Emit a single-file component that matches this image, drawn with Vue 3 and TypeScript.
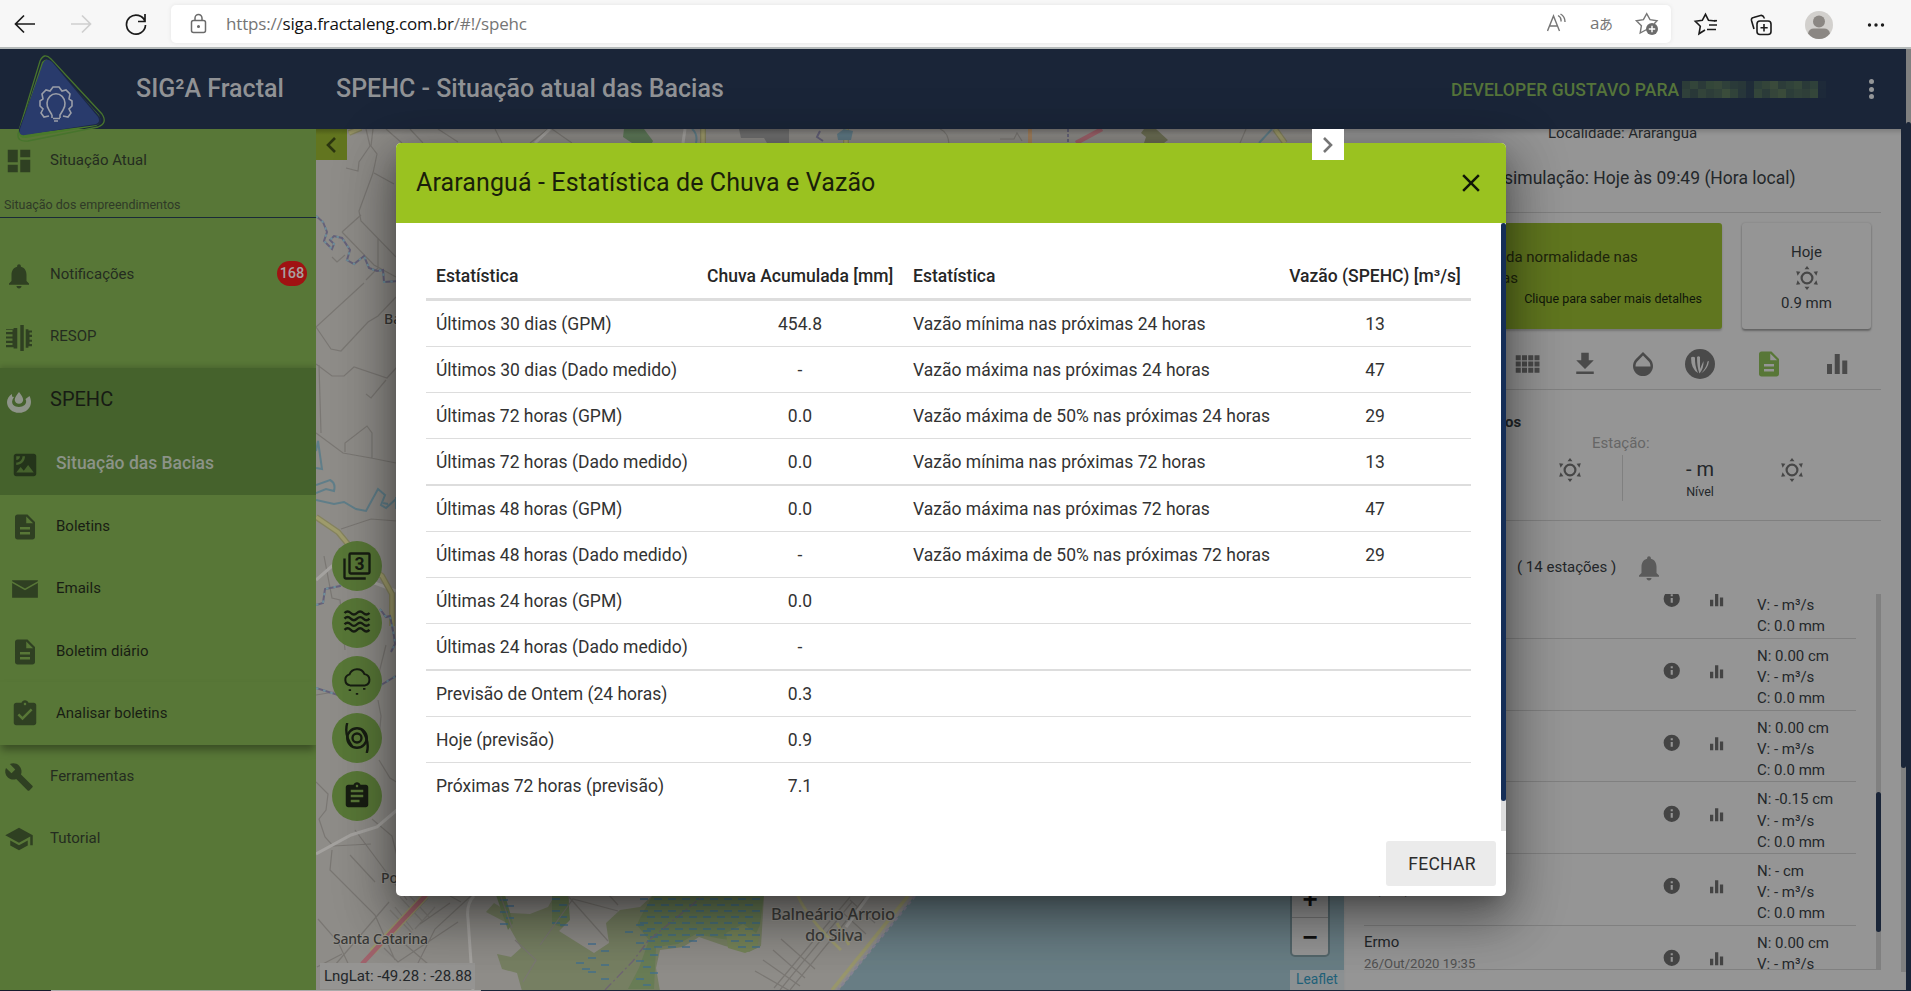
<script setup lang="ts">
interface NavItem { label: string; icon: string; kind: string; badge?: string }
interface StatRow { rain: string; rainValue: string; flow?: string; flowValue?: string; group?: boolean }

const glyphs: Record<string, string> = {
  dashboard: 'M3 13h8V3H3v10zm0 8h8v-6H3v6zm10 0h8V11h-8v10zm0-18v6h8V3h-8z',
  bell: 'M12 22c1.1 0 2-.9 2-2h-4c0 1.1.89 2 2 2zm6-6v-5c0-3.07-1.64-5.64-4.5-6.32V4c0-.83-.67-1.5-1.5-1.5s-1.5.67-1.5 1.5v.68C7.63 5.36 6 7.92 6 11v5l-2 2v1h16v-1l-2-2z',
  dam: 'M-.5 4H7V2.800h3.400v19H7V20.500H-.5v-2H6v-2H-.5v-2H6v-2H-.5v-2H6v-2H-.5v-2H6v-2H-.5zM13.200 0h3.200v24h-3.200zM18.200 4h2.500v1h4v2h-3v2h3v2h-3v2.500h3v2h-3v2h3v2h-4v1.500h-2.500z',
  drop: 'M12 0c2 3 4.200 5 4.200 8a4.300 4.300 0 0 1-8.500 0C7.700 5 10 3 12 0zM5 4.500l2 .5C2 12 8 15 12 15s9-3 6.500-8l4-3c.8 1.500 1.500 4 1.500 6a12 10.800 0 0 1-24 0C0 7 2 3.500 5 2z',
  satellite: 'M19 3H5c-1.100 0-2 .9-2 2v14c0 1.100.9 2 2 2h14c1.100 0 2-.9 2-2V5c0-1.100-.9-2-2-2zM5 4.990h3C8 6.650 6.660 8 5 8V4.990zM5 12v-2c2.760 0 5-2.250 5-5.010h2C12 8.860 8.870 12 5 12zm0 6l3.500-4.500 2.500 3.010L14.500 12l4.500 6H5z',
  doc: 'M14 2H6c-1.100 0-1.990.9-1.990 2L4 20c0 1.100.89 2 1.990 2H18c1.100 0 2-.9 2-2V8l-6-6zm2 16H8v-2h8v2zm0-4H8v-2h8v2zm-3-5V3.500L18.500 9H13z',
  mail: 'M1.700 5h20.600v.8L12 11.600 1.700 5.800zM1.700 7.200L12 13l10.300-5.800V19H1.700z',
  check: 'M19 3h-4.180C14.400 1.840 13.300 1 12 1c-1.300 0-2.400.84-2.820 2H5c-1.100 0-2 .9-2 2v14c0 1.100.9 2 2 2h14c1.100 0 2-.9 2-2V5c0-1.100-.9-2-2-2zm-7 0c.55 0 1 .45 1 1s-.45 1-1 1-1-.45-1-1 .45-1 1-1zm-2 14l-4-4 1.410-1.410L10 14.170l6.590-6.590L18 9l-8 8z',
  clipboard: 'M19 3h-4.180C14.400 1.840 13.300 1 12 1c-1.300 0-2.400.84-2.820 2H5c-1.100 0-2 .9-2 2v14c0 1.100.9 2 2 2h14c1.100 0 2-.9 2-2V5c0-1.100-.9-2-2-2zm-7 0c.55 0 1 .45 1 1s-.45 1-1 1-1-.45-1-1 .45-1 1-1zm2 14H7v-2h7v2zm3-4H7v-2h10v2zm0-4H7V7h10v2z',
  build: 'M22.700 19l-9.100-9.100c.9-2.300.4-5-1.500-6.900-2-2-5-2.400-7.400-1.300L9 6 6 9 1.600 4.700C.4 7.100.9 10.100 2.900 12.100c1.900 1.900 4.600 2.400 6.900 1.500l9.100 9.100c.4.4 1 .4 1.400 0l2.300-2.300c.5-.4.5-1.100.1-1.400z',
  school: 'M5 13.180v4L12 21l7-3.820v-4L12 17l-7-3.820zM12 3L1 9l11 6 9-4.910V17h2V9L12 3z',
  grid: 'M3 9h4V5H3v4zm0 5h4v-4H3v4zm5 0h4v-4H8v4zm5 0h4v-4h-4v4zM8 9h4V5H8v4zm5-4v4h4V5h-4zm5 9h4v-4h-4v4zM3 19h4v-4H3v4zm5 0h4v-4H8v4zm5 0h4v-4h-4v4zm5 0h4v-4h-4v4zm0-14v4h4V5h-4z',
  download: 'M19 9h-4V3H9v6H5l7 7 7-7zM5 18v2h14v-2H5z',
  opacity: 'M17.660 8L12 2.350 6.340 8C4.780 9.560 4 11.640 4 13.640s.78 4.110 2.340 5.670 3.610 2.350 5.660 2.350 4.100-.79 5.660-2.350S20 15.640 20 13.640 19.220 9.560 17.660 8zM6 14c.01-2 .62-3.270 1.760-4.400L12 5.270l4.240 4.380C17.380 10.770 17.990 12 18 14H6z',
  bars: 'M4 12h4v8H4zM10.200 4h4v16h-4zM16.200 9.200h4V20h-4z',
  close: 'M19 6.410L17.590 5 12 10.590 6.410 5 5 6.410 10.590 12 5 17.590 6.410 19 12 13.410 17.590 19 19 17.590 13.410 12z',
  info: 'M12 2a10 10 0 1 0 0 20 10 10 0 0 0 0-20zm1.300 15h-2.600v-6h2.600v6zm0-8h-2.600V6.500h2.600V9z',
  sun: 'M12 5.500a6.500 6.500 0 1 0 0 13 6.500 6.500 0 0 0 0-13zm0 2.200a4.300 4.300 0 1 1 0 8.600 4.300 4.300 0 0 1 0-8.600zM12 0l2.500 3.300h-5zM12 24l2.500-3.300h-5zM1.200 5.200l4.200.5L2.600 9.800zM22.800 5.200l-4.200.5 2.800 4.100zM1.200 18.800l4.200-.5-2.800-4.100zM22.800 18.800l-4.200-.5 2.800-4.100z',
}

const nav: NavItem[] = [
  { label: 'Notificações', icon: 'bell', kind: 'plain', badge: '168' },
  { label: 'RESOP', icon: 'dam', kind: 'plain' },
  { label: 'SPEHC', icon: 'drop', kind: 'parent' },
  { label: 'Situação das Bacias', icon: 'satellite', kind: 'sub current' },
  { label: 'Boletins', icon: 'doc', kind: 'sub' },
  { label: 'Emails', icon: 'mail', kind: 'sub flat' },
  { label: 'Boletim diário', icon: 'doc', kind: 'sub' },
  { label: 'Analisar boletins', icon: 'check', kind: 'sub last' },
  { label: 'Ferramentas', icon: 'build', kind: 'plain' },
  { label: 'Tutorial', icon: 'school', kind: 'plain' },
]

const stats: StatRow[] = [
  { rain: 'Últimos 30 dias (GPM)', rainValue: '454.8', flow: 'Vazão mínima nas próximas 24 horas', flowValue: '13' },
  { rain: 'Últimos 30 dias (Dado medido)', rainValue: '-', flow: 'Vazão máxima nas próximas 24 horas', flowValue: '47' },
  { rain: 'Últimas 72 horas (GPM)', rainValue: '0.0', flow: 'Vazão máxima de 50% nas próximas 24 horas', flowValue: '29' },
  { rain: 'Últimas 72 horas (Dado medido)', rainValue: '0.0', flow: 'Vazão mínima nas próximas 72 horas', flowValue: '13', group: true },
  { rain: 'Últimas 48 horas (GPM)', rainValue: '0.0', flow: 'Vazão máxima nas próximas 72 horas', flowValue: '47' },
  { rain: 'Últimas 48 horas (Dado medido)', rainValue: '-', flow: 'Vazão máxima de 50% nas próximas 72 horas', flowValue: '29' },
  { rain: 'Últimas 24 horas (GPM)', rainValue: '0.0' },
  { rain: 'Últimas 24 horas (Dado medido)', rainValue: '-', group: true },
  { rain: 'Previsão de Ontem (24 horas)', rainValue: '0.3' },
  { rain: 'Hoje (previsão)', rainValue: '0.9' },
  { rain: 'Próximas 72 horas (previsão)', rainValue: '7.1' },
]

const stations = [
  { level: '', name: '', date: '' },
  { level: 'N: 0.00 cm', name: '', date: '' },
  { level: 'N: 0.00 cm', name: '', date: '' },
  { level: 'N: -0.15 cm', name: '', date: '' },
  { level: 'N: - cm', name: '', date: '26/Out/2020' },
  { level: 'N: 0.00 cm', name: 'Ermo', date: '26/Out/2020 19:35' },
]

const tools: string[] = ['grid', 'download', 'opacity']

// Redacted user name: two rows of coarse tiles
const tiles = [
  '#2c3c38', '#33453a', '#2b3a39', '#334639', '#37483a', '#2f403a', '#2a3a39', '#283738', '#1f2c38', '#2d3f3a', '#334439', '#3a4a3b', '#2c3c39', '#30423a', '#35473a', '#2a3a38', '#2f413a', '#1e2a39',
  '#2f403a', '#293838', '#33443a', '#2d3d39', '#31423a', '#3a4c3b', '#31433a', '#27363a', '#1f2c39', '#33453a', '#2b3b39', '#35453a', '#3a4b3a', '#2c3d39', '#31423a', '#2f3f39', '#34463a', '#1d2939',
]

// Marsh hatching near the coast
const marsh: number[][] = []
for (let r = 0; r < 9; r++) {
  for (let c = 0; c < 9; c++) {
    const x = 640 + c * 14 + (r % 2) * 7
    const y = 899 + r * 6
    if (x > 636 + Math.max(0, r - 7) * 10 && x < 756 && !(r > 6 && x > 690 && x < 725)) marsh.push([x, y])
  }
}
for (let r = 0; r < 5; r++) {
  marsh.push([500 + (r % 2) * 6, 900 + r * 6], [552 + (r % 2) * 7, 899 + r * 6])
}
for (let r = 0; r < 11; r++) marsh.push([636 + (r % 3) * 7, 925 + r * 6])
for (let r = 0; r < 6; r++) marsh.push([588 + (r % 2) * 13, 944 + r * 7])
marsh.push([576, 963], [582, 969], [560, 925], [625, 932])
</script>

<template>
  <div class="screen">
    <div class="browser">
      <svg class="bicon back" width="22" height="20" viewBox="0 0 22 20"><path d="M21 10H2M10 1.500L1.500 10l8.500 8.500" /></svg>
      <svg class="bicon fwd" width="22" height="20" viewBox="0 0 22 20"><path d="M1 10h19M12 1.500l8.500 8.500-8.500 8.500" /></svg>
      <svg class="bicon reload" width="22" height="22" viewBox="0 0 22 22"><path d="M20 8.500A9.500 9.500 0 1 0 20.500 12M20 1v7.500h-7" /></svg>
      <div class="address">
        <svg class="lock" width="18" height="22" viewBox="0 0 18 22"><rect x="1.500" y="7.500" width="14" height="12" rx="2" /><path d="M5 7.500V5a3.500 3.500 0 0 1 7 0v2.500" /><circle cx="8.500" cy="13.500" r=".8" /></svg>
        <span class="url">https://<b>siga.fractaleng.com.br</b>/#!/spehc</span>
        <svg class="inbar" width="112" height="26" viewBox="1547 11 112 26">
          <path d="M1547.500 31l6-15 6 15M1549.500 26h8M1558 15.500a6 6 0 0 1 3 6M1560.500 14a9 9 0 0 1 4.500 8" />
          <text x="1590" y="29" class="aa">a</text><text x="1599" y="29" class="jp">あ</text>
          <path d="M1649 31l-3.300-2-6.500 3.500 1.200-7.300-5-5 7-1 3.300-6 3.300 6 7 1-2.800 3" transform="translate(1 .5)" />
          <circle cx="1652" cy="29" r="6" class="fill" /><path d="M1648.800 29h6.400M1652 25.800v6.400" class="plus" />
        </svg>
      </div>
      <svg class="outbar" width="200" height="30" viewBox="1690 8 200 30">
        <path d="M1705 29l-6 3.800 1.300-7.500-5-5 7-1 3.200-6 3 6 7 .7M1709 24h8M1707 28.500h9" />
        <path d="M1714 19.700h3" />
        <rect x="1757" y="20" width="14" height="13.500" rx="3" /><path d="M1764 23v7.500M1760.500 26.700h7.200M1754 28l-2.500-8.500q-.5-2.500 2-3l7-2q2.500-.5 3.500 2l.5 1" />
        <ellipse cx="1819" cy="24" rx="14" ry="14" class="disc" /><circle cx="1819" cy="20.500" r="6" class="head" /><path d="M1808 32.500q1-5 6-5h10q5 0 6 5-4.500 5.500-11 5.500t-11-5.500z" class="head" />
        <g class="dots"><circle cx="1869.500" cy="24" r="1.700" /><circle cx="1876" cy="24" r="1.700" /><circle cx="1882.500" cy="24" r="1.700" /></g>
      </svg>
    </div>

    <div class="page">
      <header class="top">
        <span class="brand">SIG²A Fractal</span>
        <span class="title">SPEHC - Situação atual das Bacias</span>
        <span class="user">DEVELOPER GUSTAVO PARA</span>
        <div class="redact"><i v-for="(t, i) in tiles" :key="i" :style="{ background: t }"></i></div>
        <div class="kebab"><i></i><i></i><i></i></div>
      </header>

      <div class="body">
        <aside class="side">
          <div class="first"><svg class="ic" viewBox="0 0 24 24"><path :d="glyphs.dashboard" /></svg><span>Situação Atual</span></div>
          <div class="caption">Situação dos empreendimentos</div>
          <div v-for="n in nav" :key="n.label" class="nav" :class="n.kind">
            <svg class="ic" :class="n.icon" viewBox="0 0 24 24" fill-rule="evenodd"><path :d="glyphs[n.icon]" /></svg>
            <span class="nlabel">{{ n.label }}</span>
            <span v-if="n.badge" class="badge">{{ n.badge }}</span>
          </div>
        </aside>

        <section class="map">
          <svg class="tiles" width="1028" height="861" viewBox="316 129 1028 861">
            <rect x="316" y="129" width="1028" height="861" fill="#8e8c88" />
            <path d="M916 894L838 991H1345V894z" fill="#687d84" />
            <!-- vegetation -->
            <path fill="#767f62" d="M486 912l8-9 16 10 20 1 18-7 8-14h13v28l-10 10 35 22 15-10-3-20 14-13 20-3 12-11h112l-3 50-12 6-24-6-26-9-16 10-23 3-4 18 4 23H522l-5-18-15-4-5-15 14 3 10-9-14-25z" />
            <path fill="#687c55" d="M496 895h9l8 28-5 7zM552 895h16l2 25-8 7-10-3zM640 918l14-25h110l-4 32-8 17-30-3-26-5-18 10-22 3-2 42h-26l11-21 10-28-12-15z" />
            <path fill="#758358" d="M726 933l17-9 16 11-2 13-12 5-17-5z" />
            <path fill="#5f7a59" d="M624 129h20l9 12-2 4-19-2-9-6z" />
            <g stroke="#3f6f91" stroke-width="1.300"><path v-for="(m, i) in marsh" :key="i" :d="`M${m[0]} ${m[1]}h8`" /></g>
            <!-- lanes -->
            <g fill="none" stroke="#7a7773" stroke-width="1.200">
              <path d="M366 129l4 17-11 16-1 9-12-3M373 129l-2 17 6 8-4 19-14 38 2 10 35 36M374 173l20 11M361 215l-19 17M378 238v30l-12 12M342 232l32 33 22 12M364 283l-48 44 15 22 10 2 27-29 10-6 18-19M332 257l5 5 8-7M319 365l2 68M316 364l16 12h12l10-9 33 11 10-11M366 394l5 4 15-18M345 452v-9l22-17 5 7v25M316 433l27 20 28 5 25 5M341 529l30-10 26 2" />
              <path d="M324 556l8 42 8 2 5 50M316 695l60-10 10-40M316 782l12 12-2 16-7 9 6 18 8 9 38-2M332 850l-2 20 45 45 20 45M318 919l20 23 22 47M350 855l25 27M355 830l52 70M372 819l20 17 5 20M378 700l3 16-3 34M379 760l11 18 8 5M329 972l60-70M317 967l25-13M400 940l28 24M420 924l30-21M384 948l14 14 60-40M405 989l30-60 38-35M500 894l12 34M515 940l21 20-13 22M540 945l33-46 45 12M568 896l40 45M450 896l11 6M386 129l16 14M410 129l13 14M438 129l20 13M495 129l7 14M530 143l18-14M552 129l20 14M608 894l10 11M940 129q8 3 9 15M1246 129l-6 14M1000 139h14l3-6 5 8" />
              <path d="M774 988l76-91M780 990l72-88M790 990l74-91M755 971l35 20M763 960l37 26M773 950l32 28M781 939l34 30M850 900l25 23M842 912l24 22" />
              <path d="M400 897l23 25M408 894l21 23M390 910l22 23M415 929l20-22M407 920l21-22M395 907l18 23" opacity=".7" />
            </g>
            <g fill="none" stroke="#a4a29f" stroke-width="3"><path d="M316 854l35-19 26-8 20-17M474 896q-8 8-6 23l5 72M870 894l-24 33M316 580l16-14h20l12 13 32 12M550 129l-15 14M685 129l-2 14" /></g>
            <path d="M915 896l-77 94" fill="none" stroke="#858392" stroke-width="2.500" stroke-dasharray="4 3" />
            <path d="M908 896l-76 94" fill="none" stroke="#98966c" stroke-width="3.500" />
            <path d="M797 894q10 24 44 56M849 945l-12-22" fill="none" stroke="#9d9b71" stroke-width="3" />
            <!-- main roads and water -->
            <path d="M316 517l22 15 24 29 20 15 10 18v32M703 129v14M846 129v14M349 133l12-5M1275 129l10 14" fill="none" stroke="#85835f" stroke-width="6" />
            <path d="M316 517l22 15 24 29 20 15 10 18v32M703 129v14M846 129v14M349 133l12-5M1275 129l10 14" fill="none" stroke="#9e9b6b" stroke-width="3.500" />
            <path d="M372 952l26-27 28-30" fill="none" stroke="#99966b" stroke-width="7" />
            <path d="M362 964l36-39 28-30M1076 143l26-14" fill="none" stroke="#9f626b" stroke-width="4.500" />
            <path d="M1030 129v14" stroke="#a3815e" stroke-width="4" /><path d="M1068 129v14" stroke="#67657b" stroke-width="2" stroke-dasharray="3 2" />
            <path d="M316 451l2-10 4 28-6-1M316 485l14-5q6 3 4 11l-8-2-10 4M316 500l18 4 10-2 12 7 10 2 12-22 7 6-4 10 5 3 10-9M692 129q6 5 4 14M1272 129l-13 14M396 497v12M388 504l-5-1" fill="none" stroke="#607e89" stroke-width="2" />
            <path d="M316 216l7 6 4 10-3 9 8 8 2-5-4-4 4-4 8 2 8 12-3 10 7 4 10-8 5 12 8 3 6-1 1 12 15-1 4-4M316 688l22 7 28-1 30-18M316 605l7-2 2-14 15-3 3-6 10-1 5-8 5 9M380 609l6 8 4-1 4 20 1 8-4 8M820 131l-3 6 6 4" fill="none" stroke="#65627a" stroke-width="2" />
            <path d="M316 216l7 6 4 10-3 9 8 8 2-5-4-4 4-4 8 2 8 12-3 10 7 4 10-8 5 12 8 3 6-1 1 12 15-1 4-4M316 688l22 7 28-1 30-18M316 605l7-2 2-14 15-3 3-6 10-1 5-8 5 9M380 609l6 8 4-1 4 20 1 8-4 8" fill="none" stroke="#6e8f9b" stroke-width="2" stroke-dasharray="2.500 5" />
            <path d="M605 990l28-29 15-20 56-46" fill="none" stroke="#6e6472" stroke-width="1.300" stroke-dasharray="9 3 2 3" />
            <path d="M739 129h50v14h-22l-3-5h-23z" fill="#717171" /><path d="M1144 129h12l12 11-4 3h-20l2-6-5-4z" fill="#6d6f54" /><path d="M844 129l9 2-2 9-13 0-1-6z" fill="#607b86" />
            <g class="place"><text x="384" y="324">Ba</text><text x="381" y="883">Po</text><text x="333" y="944" textLength="95">Santa Catarina</text></g>
            <g class="town" text-anchor="middle"><text x="833" y="920" textLength="124">Balneário Arroio</text><text x="834" y="941" textLength="58">do Silva</text></g>
          </svg>
          <div class="collapse"><svg width="14" height="18" viewBox="0 0 14 18"><path d="M10 2L3 9l7 7" /></svg></div>
          <div class="fabs">
            <div class="fab"><svg width="30" height="30" viewBox="0 0 24 24"><path d="M7 2h14a1 1 0 0 1 1 1v14a1 1 0 0 1-1 1H7a1 1 0 0 1-1-1V3a1 1 0 0 1 1-1zM2 6v15a1 1 0 0 0 1 1h16" class="ln" /><text x="14" y="14.900" class="three">3</text></svg></div>
            <div class="fab"><svg width="30" height="30" viewBox="0 0 24 24"><path v-for="k in 4" :key="k" :d="`M2 ${k * 4.5 - .5}q2.500-2.500 5 0t5 0 5 0 5 0`" class="ln" /></svg></div>
            <div class="fab"><svg width="30" height="30" viewBox="0 0 24 24"><path d="M6.500 15.500a4.500 4.500 0 0 1-.5-8.800 6.500 6.500 0 0 1 12-.2 4.600 4.600 0 0 1 .5 9z" class="ln thin" /><path d="M6.300 18.500v1.500M12 21.500v1.500M17.800 17.500v1.500" class="ln" /></svg></div>
            <div class="fab"><svg width="30" height="30" viewBox="0 0 24 24"><circle cx="12" cy="12" r="3.600" class="ln" /><circle cx="12" cy="12" r="7.800" class="ln" /><path d="M4.200 0Q1.500 9 8 18.500M19.800 24Q22.500 15 16 5.500" class="ln" /></svg></div>
            <div class="fab"><svg width="30" height="30" viewBox="0 0 24 24"><path :d="glyphs.clipboard" /></svg></div>
          </div>
          <div class="coords">LngLat: -49.28 : -28.88</div>
          <div class="zoomer"><span>+</span><span>−</span></div>
          <div class="leaflet">Leaflet</div>
        </section>

        <section class="panel">
          <div class="scroll">
            <div class="place-line">Localidade: Araranguá</div>
            <div class="sim">simulação: Hoje às 09:49 (Hora local)</div>
            <div class="cards">
              <div class="alert">
                <div>da normalidade nas</div><div>as</div><small>Clique para saber mais detalhes</small>
              </div>
              <div class="today"><span>Hoje</span><svg class="sun" viewBox="0 0 24 24" fill-rule="evenodd"><path :d="glyphs.sun" /></svg><span>0.9 mm</span></div>
            </div>
            <div class="tools">
              <svg v-for="t in tools" :key="t" class="tool" viewBox="0 0 24 24"><path :d="glyphs[t]" /></svg>
              <svg class="round" width="30" height="30" viewBox="0 0 30 30"><circle cx="15" cy="15" r="15" /><path d="M6 8.500q2-1.500 4 0-.5 8 3 15.500-7-4-7-15.500zM12 8q1.500-1.500 3 0v12l3.500-8q.5 7-4 12.500-2.500-6-2.500-16.500zM24 12q-1 8-8 12.500 5.500-6 6.500-12z" /></svg>
              <svg class="tool doc-green" viewBox="0 0 24 24"><path :d="glyphs.doc" /></svg>
              <svg class="tool chart" viewBox="0 0 24 24"><path :d="glyphs.bars" /></svg>
            </div>
            <div class="station">
              <div class="bold">os</div>
              <div class="est">Estação:</div>
              <div class="readings">
                <svg class="sun s1" viewBox="0 0 24 24" fill-rule="evenodd"><path :d="glyphs.sun" /></svg>
                <div class="bar"></div>
                <div class="lvl"><span>- m</span><small>Nível</small></div>
                <svg class="sun" viewBox="0 0 24 24" fill-rule="evenodd"><path :d="glyphs.sun" /></svg>
              </div>
            </div>
            <div class="count"><span>( 14 estações )</span><svg class="ic" viewBox="0 0 24 24"><path :d="glyphs.bell" /></svg></div>
            <div class="list">
              <div class="rows">
                <div v-for="(s, i) in stations" :key="i" class="strow">
                  <div class="who"><span>{{ s.name }}</span><small>{{ s.date }}</small></div>
                  <svg class="mini" viewBox="0 0 24 24" fill-rule="evenodd"><path :d="glyphs.info" /></svg>
                  <svg class="mini b" viewBox="0 0 24 24"><path :d="glyphs.bars" /></svg>
                  <div class="vals"><span>{{ s.level }}</span><span>V: - m³/s</span><span>C: 0.0 mm</span></div>
                </div>
              </div>
              <div class="track"><i></i></div>
            </div>
          </div>
          <div class="ptrack"><i></i></div>
        </section>
      </div>
      <div class="bottom-edge"><i></i><i></i></div>
      <div class="wtrack"><i></i></div>
    </div>

    <svg class="logo" width="110" height="100" viewBox="0 49 110 100">
      <path d="M40 61q4-9 11-2l51 55q6 9-4 13l-70 14q-11 1-10-7z" fill="none" stroke="#47742d" stroke-width="1.300" />
      <path d="M42 62q4-5 9 0l48 53q4 8-3 11l-70 12q-8 0-7-6z" fill="#4a7a2b" />
      <path d="M45 61q5-3 9 2l46 54q4 6-3 8l-70 9q-9 1-8-5z" fill="#1c2845" />
      <path d="M43 63q3-6 9-1l46 55q3 5-2 7l-71 11q-7 1-5-6z" fill="#293b6c" />
      <g fill="none" stroke="#9a9ea8" stroke-width="1.600"><path d="M49 116l-5 1-3-4 2-4-3-3v-5l3-2-1-5 4-4 4 1 3-4h6l3 4 4-1 4 4-1 5 3 2v5l-3 3 2 4-3 4-5-1M52 115l-3-5a9 10 0 1 1 14 0l-3 5v3M52 115v3M53 118.500h7M54 121h4" /></g>
    </svg>

    <div class="modal">
      <div class="mhead"><span>Araranguá - Estatística de Chuva e Vazão</span><svg width="30" height="30" viewBox="0 0 24 24"><path :d="glyphs.close" /></svg></div>
      <div class="mbody">
        <table>
          <colgroup><col class="c1" /><col class="c2" /><col class="c3" /><col class="c4" /></colgroup>
          <thead><tr><th>Estatística</th><th class="mid">Chuva Acumulada [mm]</th><th>Estatística</th><th class="mid">Vazão (SPEHC) [m³/s]</th></tr></thead>
          <tbody>
            <tr v-for="r in stats" :key="r.rain" :class="{ group: r.group }">
              <td>{{ r.rain }}</td><td class="mid">{{ r.rainValue }}</td><td>{{ r.flow }}</td><td class="mid">{{ r.flowValue }}</td>
            </tr>
          </tbody>
        </table>
        <div class="mtrack"><i></i></div>
      </div>
      <div class="mfoot"><button>FECHAR</button></div>
    </div>
    <div class="expand"><svg width="14" height="18" viewBox="0 0 14 18"><path d="M3 2l7 7-7 7" /></svg></div>
  </div>
</template>

<style>
html, body { margin: 0; overflow: hidden; background: #1a2538; }
</style>

<style scoped>
* { box-sizing: border-box; }
.screen { position: relative; width: 1911px; height: 991px; overflow: hidden; font-family: Roboto, "Liberation Sans", sans-serif; font-size: 15px; color: #23272a; display: flex; flex-direction: column; }
svg { flex: none; display: block; }
.browser { height: 49px; flex: none; background: #f7f7f7; border-bottom: 2px solid #b4b9b9; display: flex; align-items: center; padding-left: 14px; }
.bicon { fill: none; stroke: #1b1b1b; stroke-width: 1.700; }
.fwd { margin-left: 34px; stroke: #cfcfcf; }
.reload { margin-left: 33px; }
.address { margin-left: 24px; width: 1500px; height: 38px; background: #fff; border-radius: 5px; box-shadow: 0 0 4px #e4e4e4; display: flex; align-items: center; padding-left: 19px; }
.lock { fill: none; stroke: #6b6b6b; stroke-width: 1.500; }
.url { margin-left: 18px; font: 17px/24px "Open Sans", "Noto Sans", sans-serif; color: #757575; width: 1321px; letter-spacing: -.18px; }
.url b { font-weight: 400; color: #111; }
.inbar { fill: none; stroke: #767676; stroke-width: 1.400; }
.inbar text { fill: #767676; stroke: none; }
.aa { font: 17px "Open Sans", sans-serif; }
.jp { font: 14px "Noto Sans CJK JP", sans-serif; }
.inbar .fill { fill: #6c6c6c; stroke: none; }
.plus { stroke: #fff; }
.outbar { margin-left: 19px; fill: none; stroke: #1b1b1b; stroke-width: 1.600; }
.outbar .disc { fill: #d2d0cd; stroke: none; }
.outbar .head { fill: #8b8783; stroke: none; }
.dots { fill: #1b1b1b; stroke: none; }

.page { position: relative; height: 942px; background: #1a2538; }
.top { height: 80px; width: 1906px; background: #1a2538; display: flex; align-items: center; color: #909295; font-size: 25px; font-weight: 500; padding-left: 136px; }
.brand { width: 200px; }
.brand, .title { margin-top: -1px; }
.title { width: 1115px; }
.user { font-size: 17.500px; color: #55743a; width: 231px; white-space: nowrap; letter-spacing: .09px; margin-top: 1px; }
.redact { width: 144px; height: 17px; display: grid; grid-template-columns: repeat(18, 1fr); }
.kebab { margin-left: 43px; display: flex; flex-direction: column; gap: 2.700px; }
.kebab i { width: 5px; height: 5px; border-radius: 50%; background: #949698; }
.body { height: 861px; display: flex; }

.side { width: 316px; background: #587737; color: #242c20; overflow: hidden; flex: none; }
.ic { width: 30px; height: 30px; fill: #2f4022; }
.first { display: flex; align-items: center; padding: 17px 0 0 4px; height: 47px; }
.first span { margin: -2px 0 0 16px; }
.caption { height: 42px; padding: 20px 0 0 4px; font-size: 12.500px; line-height: 17px; border-bottom: 1px solid #1a2a38; margin-bottom: 25.500px; color: #2f3a27; }
.nav { height: 62.500px; display: flex; align-items: center; padding-left: 4px; }
.nav:nth-child(3), .nav:nth-child(4) { height: 62px; }
.nav:nth-child(3) .nlabel, .nav:nth-child(4) .nlabel, .parent .nlabel { margin-top: -2px; }
.nav .ic { margin-top: 2px; }
.nlabel { margin-left: 16px; flex: 1; }
.parent { height: 64.500px; background: #45622c; font-size: 20px; box-shadow: 0 -2px 5px rgba(0,0,0,.15); color: #171b14; }
.nav.parent .ic { width: 24px; height: 24px; margin: 8px 3px 0; fill: #8e9489; }
.nav .dam { width: 26px; margin: 2px 2px 0; }
.sub { padding-left: 10px; color: #181e14; }
.sub .nlabel { padding-top: 1px; }
.flat .nlabel { padding-top: 0; margin-top: -1px; }
.current { background: #45622c; color: #8b9387; font-size: 17.500px; font-weight: 500; }
.current .nlabel { padding-top: 0; }
.nav.current .ic { fill: #24341a; margin-top: 3px; }
.last { box-shadow: 0 6px 8px -1px rgba(0,0,0,.35); }
.last .nlabel { padding-top: 0; }
.badge { width: 30px; height: 25px; border-radius: 13px; background: #a01212; color: #a8a0a0; display: grid; place-items: center; font-weight: 500; font-size: 14.500px; margin: -3px 9px 0 0; }

.map { position: relative; width: 1028px; flex: none; overflow: hidden; }
.tiles { position: absolute; left: 0; top: 0; }
.map::after { content: ""; position: absolute; left: 0; right: 0; top: 0; height: 6px; background: linear-gradient(rgba(0,0,0,.22), transparent); }
.place { font: 500 14px "Noto Sans", sans-serif; fill: #393937; stroke: #96948f; stroke-width: 2px; paint-order: stroke; }
.town { font: 500 16.500px "Noto Sans", sans-serif; fill: #3f3f3c; stroke: #96948f; stroke-width: 2px; paint-order: stroke; }
.collapse { position: absolute; left: 0; top: 0; width: 31px; height: 31px; background: #62751f; display: grid; place-items: center; }
.collapse path { fill: none; stroke: #2b350f; stroke-width: 2.600; }
.fabs { position: absolute; left: 16px; top: 412px; display: flex; flex-direction: column; gap: 7.400px; }
.fab { width: 50px; height: 50px; border-radius: 50%; background: #587737; display: grid; place-items: center; fill: #171d12; }
.ln { fill: none; stroke: #171d12; stroke-width: 1.900; }
.thin { stroke-width: 1.600; }
.three { font: 700 14px Roboto, sans-serif; text-anchor: middle; }
.coords { position: absolute; left: 4px; top: 834px; width: 155px; height: 26px; background: #959492; padding-left: 4px; line-height: 26px; }
.zoomer { position: absolute; left: 974px; top: 749px; width: 40px; height: 79px; border: 2px solid #53656a; border-radius: 5px; background: #959595; display: grid; grid-template-rows: 38px 37px; text-align: center; font: 700 26px/38px "Liberation Sans", sans-serif; color: #111; }
.zoomer span:first-child { border-bottom: 1px solid #777; }
.leaflet { position: absolute; right: 0; bottom: 0; width: 54px; height: 20px; background: #8b9092; color: #1f6078; font-size: 13.750px; line-height: 19px; padding-left: 6px; }

.panel { width: 562px; background: #959595; display: flex; box-shadow: inset 0 5px 5px -3px rgba(0,0,0,.2); }
.scroll { width: 557px; height: 861px; overflow: hidden; }
.ptrack { width: 5px; height: 843px; background: #808080; }
.ptrack i { display: block; height: 639px; background: #1a2538; border-radius: 0 0 3px 3px; }
.place-line { margin: -5px 0 0 204px; height: 20px; line-height: 18px; }
.sim { margin: 20px 20px 0; padding-left: 140px; font-size: 17.500px; line-height: 28px; height: 49px; border-bottom: 1px solid #808080; white-space: nowrap; }
.cards { display: flex; margin-top: 10px; height: 106px; gap: 20px; }
.alert { width: 378px; background: #60761f; border-radius: 3px; box-shadow: 0 2px 2px rgba(0,0,0,.2); padding: 24px 20px 0 162px; line-height: 21px; color: #1d240c; }
.alert div:nth-child(2) { text-indent: -4px; line-height: 20px; }
.alert small { display: block; font-size: 12.500px; text-align: right; color: #10160a; }
.today { width: 129px; border-radius: 3px; box-shadow: 0 2px 2px rgba(0,0,0,.3), 0 0 2px rgba(0,0,0,.18); display: flex; flex-direction: column; align-items: center; padding-top: 19px; line-height: 21px; }
.sun { width: 24px; height: 24px; fill: #474747; }
.today .sun { margin: 3px 0 3px; }
.tools { margin: 0 20px; height: 61px; border-bottom: 1px solid #808080; display: flex; align-items: center; padding: 10px 0 0 148px; fill: #4a4a4a; }
.tool { width: 30px; height: 30px; margin-right: 27.500px; }
.tool:nth-child(3) { margin-right: 27px; }
.tool:nth-child(2) { margin: 0 28px 0 0; }
.round path { fill: #959595; }
.tool.doc-green { margin: 0 0 0 39px; fill: #587737; }
.tool.chart { margin: 0 0 0 38px; }
.station { margin: 0 20px; height: 131px; border-bottom: 1px solid #808080; padding-top: 22px; }
.bold { font-weight: 700; padding-left: 141px; line-height: 21px; }
.est { color: #666; padding-left: 228px; line-height: 21px; }
.readings { display: flex; height: 46px; margin-top: 1px; }
.readings .sun { margin-top: 3px; }
.readings .s1 { margin-left: 194px; }
.bar { width: 1px; background: #808080; margin: 0 0 0 40px; }
.lvl { width: 28px; margin: 1px 66px 0 63px; text-align: center; white-space: nowrap; font-size: 20px; line-height: 26px; }
.lvl small { display: block; font-size: 12.500px; line-height: 20px; }
.count { height: 73px; padding: 19px 0 0 173px; display: flex; align-items: center; }
.count span { width: 117px; }
.count svg { margin-top: 2px; fill: #5b5b5b; }
.list { margin: 0 20px; height: 376px; display: flex; border-bottom: 1px solid #808080; }
.rows { width: 492px; margin-right: 20px; height: 375px; overflow: hidden; }
.strow { height: 71.750px; border-bottom: 1px solid #808080; display: flex; align-items: center; }
.strow:first-child { margin-top: -27px; }
.who { width: 298px; line-height: 21px; margin-top: -16px; }
.who span { height: 20.500px; }
.who span, .who small, .vals span { display: block; }
.who small { height: 21px; font-size: 13.100px; color: #505050; }
.mini { width: 19.500px; height: 19.500px; fill: #444; margin-top: -7px; }
.b { margin: -5px 0 0 24px; width: 21px; }
.vals { margin: 7px 0 0 30.500px; line-height: 21px; white-space: nowrap; }
.vals span { height: 21.200px; }
.track { width: 5px; background: #808080; }
.track i { display: block; height: 140px; margin-top: 198px; border-radius: 3px; background: #1a2538; }
.bottom-edge { height: 1px; display: flex; }
.bottom-edge i:first-child { width: 51px; background: #16192b; }
.bottom-edge i:last-child { width: 430px; background: #aaa; }
.wtrack { position: absolute; right: 0; top: 0; width: 5px; height: 942px; background: #808080; padding-top: 73px; }
.wtrack i { display: block; height: 869px; background: #1a2538; border-radius: 3px 3px 0 0; }
.logo { position: absolute; left: 0; top: 49px; }

.modal { position: absolute; left: 396px; top: 143px; width: 1110px; height: 753px; background: #fff; border-radius: 5px; box-shadow: 0 9px 19px -9px rgba(0,0,0,.3), 0 20px 48px 4px rgba(0,0,0,.32), 0 11px 58px 10px rgba(0,0,0,.18); color: #333; overflow: visible; }
.mhead { height: 80px; background: #9ac220; border-radius: 5px 5px 0 0; display: flex; align-items: center; justify-content: space-between; padding: 0 20px; color: #1a1f0a; font-size: 25px; letter-spacing: .11px; }
.mhead span { margin-top: -1px; }
.mhead svg { fill: #111607; }
.mbody { display: flex; height: 608px; padding: 30px 0 0 30px; }
table { width: 1045px; height: 556px; border-collapse: separate; border-spacing: 0; table-layout: fixed; font-size: 17.500px; }
.c1 { width: 271px; } .c2 { width: 206px; } .c3 { width: 376px; } .c4 { width: 192px; }
th { height: 48px; border-bottom: 3px solid #ddd; font-weight: 500; text-align: left; padding: 0 10px; white-space: nowrap; color: #262626; }
td { height: 46px; border-bottom: 1px solid #ddd; padding: 0 10px; white-space: nowrap; line-height: 20px; }
.group td { height: 47px; border-bottom-width: 2px; }
tr:last-child td { border-bottom-color: #fff; }
thead tr:last-child th { border-bottom-color: #ddd; }
.mid { text-align: center; }
.mtrack { margin: -30px 0 0 30px; width: 5px; height: 608px; background: #ddd; }
.mtrack i { display: block; height: 578px; background: #152e57; border-radius: 3px; }
.mfoot { display: flex; justify-content: flex-end; padding: 10px 10px 0; }
button { width: 110px; height: 45px; border: 0; border-radius: 3px; background: #ebebeb; color: #2c2c2c; font: 17.500px Roboto, sans-serif; letter-spacing: .25px; padding: 0 0 0 2px; }
.expand { position: absolute; left: 1312px; top: 129px; width: 32px; height: 31px; background: #fff; display: grid; place-items: center; }
.expand path { fill: none; stroke: #757575; stroke-width: 2.600; }
</style>
